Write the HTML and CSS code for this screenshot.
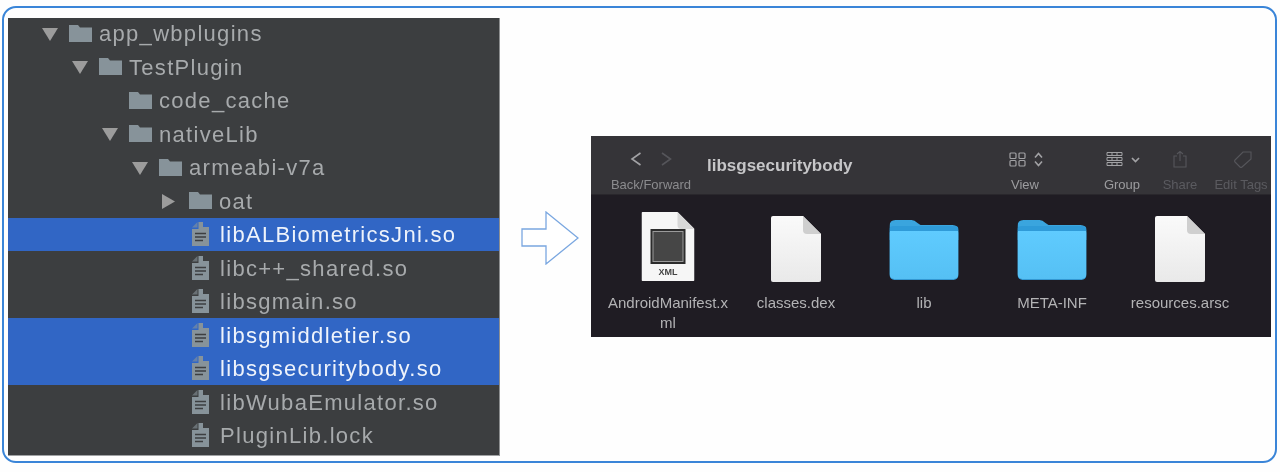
FILE: index.html
```html
<!DOCTYPE html>
<html lang="en">
<head>
    <meta charset="UTF-8">
    <meta name="viewport" content="width=device-width, initial-scale=1.0">
    <title>libsgsecuritybody</title>
    <link rel="stylesheet" href="styles.css">
</head>
<body>
    <svg class="defs" width="0" height="0">
        <defs>
            <linearGradient id="paper" x1="0" y1="0" x2="0" y2="1">
                <stop offset="0" stop-color="#fafafa"/>
                <stop offset="1" stop-color="#e9e9e9"/>
            </linearGradient>
            <linearGradient id="blue" x1="0" y1="0" x2="0" y2="1">
                <stop offset="0" stop-color="#60ccff"/>
                <stop offset="1" stop-color="#55c0f4"/>
            </linearGradient>
        </defs>
        <symbol id="twist-down" viewBox="0 0 16 13"><path d="M0 0H16L8 13Z"/></symbol>
        <symbol id="twist-right" viewBox="0 0 13 15"><path d="M0 0L13 7.5L0 15Z"/></symbol>
        <symbol id="tree-folder" viewBox="0 0 23 17"><path d="M0 0H9L11 2.5H23V17H0Z"/></symbol>
        <symbol id="tree-file" viewBox="0 0 17 24">
            <path d="M6.5 0H11V5H17V24H0V7H6.5Z" fill="#87939a"/>
            <path d="M8 0H11V5H8Z" fill="#87939a"/>
            <path d="M0 5.5L5.5 0V5.5Z" fill="#87939a" opacity=".6"/>
            <path d="M3 11.5H14M3 15H14M3 18.5H11" stroke="#3d3f41" stroke-width="1.4" fill="none"/>
        </symbol>
        <symbol id="doc" viewBox="0 0 50 66">
            <path d="M2 0H32L50 18V64Q50 66 48 66H2Q0 66 0 64V2Q0 0 2 0Z" fill="url(#paper)"/>
            <path d="M32 0L50 18H36Q32 18 32 14Z" fill="#cfcfcf"/>
        </symbol>
        <symbol id="big-folder" viewBox="0 0 69 60">
            <path d="M0 6Q0 0 6 0H22Q25 0 28 3L31 5H63Q69 5 69 11V20H0Z" fill="#3aa5de"/>
            <rect y="7" width="69" height="53" rx="5" fill="#3498d2"/>
            <rect y="8" width="69" height="51" rx="5" fill="url(#blue)"/>
            <path d="M0 9Q0 6 4 6H65Q69 6 69 9V11H0Z" fill="#2f9bd8"/>
        </symbol>
    </svg>

    <div class="frame">
        <div class="tree-panel">
            <div class="tree">
                <div class="row lv0"><span class="twist"><svg class="tri-down"><use href="#twist-down"/></svg></span><svg class="folder"><use href="#tree-folder"/></svg><span class="name">app_wbplugins</span></div>
                <div class="row lv1"><span class="twist"><svg class="tri-down"><use href="#twist-down"/></svg></span><svg class="folder"><use href="#tree-folder"/></svg><span class="name">TestPlugin</span></div>
                <div class="row lv2"><span class="twist"></span><svg class="folder"><use href="#tree-folder"/></svg><span class="name">code_cache</span></div>
                <div class="row lv2"><span class="twist"><svg class="tri-down"><use href="#twist-down"/></svg></span><svg class="folder"><use href="#tree-folder"/></svg><span class="name">nativeLib</span></div>
                <div class="row lv3"><span class="twist"><svg class="tri-down"><use href="#twist-down"/></svg></span><svg class="folder"><use href="#tree-folder"/></svg><span class="name">armeabi-v7a</span></div>
                <div class="row lv4"><span class="twist"><svg class="tri-right"><use href="#twist-right"/></svg></span><svg class="folder"><use href="#tree-folder"/></svg><span class="name">oat</span></div>
                <div class="row file selected"><svg class="file-icon"><use href="#tree-file"/></svg><span class="name">libALBiometricsJni.so</span></div>
                <div class="row file"><svg class="file-icon"><use href="#tree-file"/></svg><span class="name">libc++_shared.so</span></div>
                <div class="row file"><svg class="file-icon"><use href="#tree-file"/></svg><span class="name">libsgmain.so</span></div>
                <div class="row file selected"><svg class="file-icon"><use href="#tree-file"/></svg><span class="name">libsgmiddletier.so</span></div>
                <div class="row file selected"><svg class="file-icon"><use href="#tree-file"/></svg><span class="name">libsgsecuritybody.so</span></div>
                <div class="row file"><svg class="file-icon"><use href="#tree-file"/></svg><span class="name">libWubaEmulator.so</span></div>
                <div class="row file"><svg class="file-icon"><use href="#tree-file"/></svg><span class="name">PluginLib.lock</span></div>
            </div>
        </div>

        <svg class="arrow" viewBox="0 0 58 54">
            <path d="M1 18H25V1L57 27L25 53V35H1Z" fill="#fff" stroke="#7aa7e0" stroke-width="1.3"/>
        </svg>

        <div class="finder">
            <div class="toolbar">
                <div class="tool nav">
                    <svg class="tool-icon" width="44" height="20" viewBox="0 0 44 20">
                        <path d="M11.5 2L3 8L11.5 14" fill="none" stroke="#a2a2a5" stroke-width="1.6"/>
                        <path d="M33 2L41.5 8L33 14" fill="none" stroke="#55555a" stroke-width="1.6"/>
                    </svg>
                    <span class="tool-label">Back/Forward</span>
                </div>
                <div class="finder-title">libsgsecuritybody</div>
                <div class="tool view">
                    <svg class="tool-icon" width="36" height="20" viewBox="0 0 36 20">
                        <g fill="none" stroke="#a2a2a5" stroke-width="1.2">
                            <rect x="3" y="2" width="6" height="5.5" rx="1"/><rect x="12" y="2" width="6" height="5.5" rx="1"/>
                            <rect x="3" y="9.5" width="6" height="5.5" rx="1"/><rect x="12" y="9.5" width="6" height="5.5" rx="1"/>
                            <path d="M28 6.5L31.5 2.5L35 6.5M28 10.5L31.5 14.5L35 10.5" stroke-width="1.6"/>
                        </g>
                    </svg>
                    <span class="tool-label">View</span>
                </div>
                <div class="tool group">
                    <svg class="tool-icon" width="36" height="20" viewBox="0 0 36 20">
                        <g fill="none" stroke="#a2a2a5" stroke-width="1">
                            <path d="M3 1.5H18V4.5H3ZM8 1.5V4.5M13 1.5V4.5"/>
                            <path d="M3 6.5H18V9.5H3ZM8 6.5V9.5M13 6.5V9.5"/>
                            <path d="M3 11.5H18V14.5H3ZM8 11.5V14.5M13 11.5V14.5"/>
                            <path d="M28 7L31.5 10.5L35 7" stroke-width="1.7"/>
                        </g>
                    </svg>
                    <span class="tool-label">Group</span>
                </div>
                <div class="tool share dim">
                    <svg class="tool-icon" width="16" height="20" viewBox="0 0 16 20">
                        <path d="M5 5H2V16H14V5H11M8 10V0.5M5 3L8 0.5L11 3" fill="none" stroke="#56565b" stroke-width="1.1"/>
                    </svg>
                    <span class="tool-label">Share</span>
                </div>
                <div class="tool tags dim">
                    <svg class="tool-icon" width="22" height="20" viewBox="0 0 22 20">
                        <path d="M5 9L13 1H21V8L12 16Q11 17 10 16L5 11Q4 10 5 9Z" fill="none" stroke="#56565b" stroke-width="1.1"/>
                    </svg>
                    <span class="tool-label">Edit Tags</span>
                </div>
            </div>
            <div class="files">
                <div class="item">
                    <svg class="xml-icon" viewBox="0 0 53 69">
                        <path d="M1 0H36L53 17V68Q53 69 52 69H1Q0 69 0 68V1Q0 0 1 0Z" fill="#f6f6f6"/>
                        <path d="M36 0L53 17H40Q36 17 36 13Z" fill="#d8d8d8"/>
                        <rect x="9" y="17" width="35" height="35" fill="#2c2c2c"/>
                        <rect x="11.5" y="19.5" width="30" height="30" fill="#464646" stroke="#9a9a9a"/>
                        <text x="26.5" y="63" class="xml-tag">XML</text>
                    </svg>
                    <span class="item-name">AndroidManifest.x<br>ml</span>
                </div>
                <div class="item"><svg class="doc-icon"><use href="#doc"/></svg><span class="item-name">classes.dex</span></div>
                <div class="item"><svg class="folder-icon"><use href="#big-folder"/></svg><span class="item-name">lib</span></div>
                <div class="item"><svg class="folder-icon"><use href="#big-folder"/></svg><span class="item-name">META-INF</span></div>
                <div class="item"><svg class="doc-icon"><use href="#doc"/></svg><span class="item-name">resources.arsc</span></div>
            </div>
        </div>
    </div>
</body>
</html>
```

FILE: styles.css
```css
* {
    margin: 0;
    padding: 0;
    box-sizing: border-box;
}
body {
    background-color: #fefefe;
    font-family: "Liberation Sans", Arial, sans-serif;
    height: 472px;
    overflow: hidden;
}
.defs {
    position: absolute;
}
.frame {
    display: flex;
    align-items: flex-start;
    width: 1275px;
    height: 457px;
    margin: 6px 0 0 2px;
    padding: 10px 0 0 4px;
    border: 2px solid #3a85d8;
    border-radius: 14px;
}

/* left: project tree */
.tree-panel {
    width: 492px;
    height: 438px;
    flex-shrink: 0;
    overflow: hidden;
    background-color: #3c3e40;
    border-right: 1px solid #8d8f91;
    border-bottom: 1px solid #a0a2a4;
    filter: blur(0.45px);
}
.tree {
    margin-top: -1.5px;
}
.row {
    display: flex;
    align-items: center;
    height: 33.5px;
    font-size: 22px;
    letter-spacing: 1.3px;
    color: #a7aaac;
}
.name {
    margin-top: 2px;
}
.lv0 { padding-left: 31px; }
.lv1 { padding-left: 61px; }
.lv2 { padding-left: 91px; }
.lv3 { padding-left: 121px; }
.lv4 { padding-left: 151px; }
.file { padding-left: 184px; }
.selected {
    background-color: #3166c5;
    color: #eef3fb;
}
.twist {
    display: flex;
    width: 30px;
    flex-shrink: 0;
    padding: 2px 0 0 3px;
    fill: #9c9c9c;
}
.tri-down {
    width: 16px;
    height: 13px;
}
.tri-right {
    width: 13px;
    height: 15px;
}
.folder {
    width: 23px;
    height: 17px;
    margin-right: 7px;
    flex-shrink: 0;
    fill: #87939a;
}
.file-icon {
    width: 17px;
    height: 24px;
    margin-right: 11px;
    flex-shrink: 0;
}

/* middle arrow */
.arrow {
    width: 58px;
    height: 54px;
    margin: 193px 0 0 21px;
    flex-shrink: 0;
}

/* right: finder window */
.finder {
    width: 680px;
    height: 201px;
    margin: 118px 0 0 12px;
    flex-shrink: 0;
    overflow: hidden;
    background-color: #1f1c23;
    filter: blur(0.6px);
}
.toolbar {
    display: flex;
    height: 59px;
    background-color: #353438;
    border-bottom: 1px solid #29272c;
}
.tool {
    display: flex;
    flex-direction: column;
    align-items: center;
    flex-shrink: 0;
    padding-top: 15px;
}
.tool-icon {
    flex-shrink: 0;
}
.tool-label {
    margin-top: 7px;
    font-size: 13px;
    line-height: 14px;
    white-space: nowrap;
    color: #8b8b8e;
}
.nav { width: 120px; }
.finder-title {
    width: 370px;
    margin-left: -4px;
    padding-top: 20px;
    font-size: 17px;
    line-height: 20px;
    font-weight: bold;
    color: #c6c6c8;
}
.view { width: 40px; margin-left: -43px; }
.group { width: 60px; margin-left: 47px; }
.share { width: 40px; margin-left: 8px; }
.tags { width: 60px; margin-left: 11px; }
.view .tool-label,
.group .tool-label {
    color: #9c9c9f;
}
.dim .tool-label {
    color: #5b5b60;
}

.files {
    display: grid;
    grid-template-columns: repeat(5, 128px);
    padding-left: 13px;
}
.item {
    display: flex;
    flex-direction: column;
    align-items: center;
    height: 142px;
    position: relative;
    padding-top: 98px;
}
.item svg {
    position: absolute;
    left: 50%;
    transform: translateX(-50%);
}
.xml-icon {
    top: 17px;
    width: 53px;
    height: 69px;
}
.xml-tag {
    font-size: 9px;
    font-weight: bold;
    text-anchor: middle;
    fill: #444;
}
.doc-icon {
    top: 21px;
    width: 50px;
    height: 66px;
}
.folder-icon {
    top: 25px;
    width: 69px;
    height: 60px;
}
.item-name {
    font-size: 15px;
    line-height: 20px;
    white-space: nowrap;
    text-align: center;
    color: #b3b3b5;
}
```
